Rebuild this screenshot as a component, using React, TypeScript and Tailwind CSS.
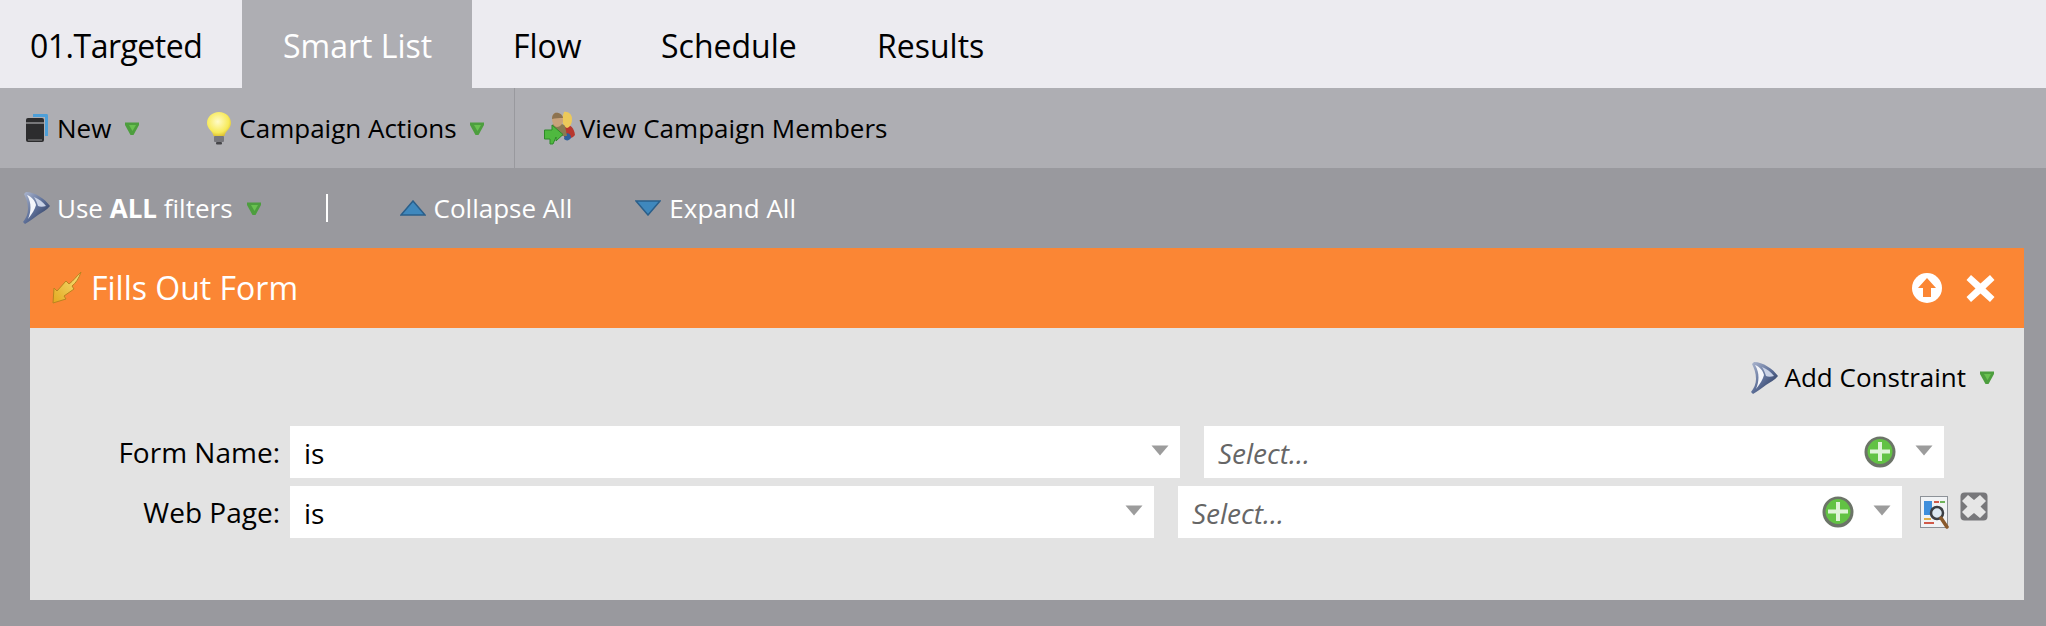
import type { ReactNode } from "react";

function GreenCaret() {
  return (
    <svg width="14" height="13" viewBox="0 0 14 13" className="shrink-0">
      <path d="M0 0.5 H14 V3 L8.5 13 H5.5 L0 3 Z" fill="#4d9e3e" />
      <path d="M4 3 H11 L7.5 9 Z" fill="#69c150" />
    </svg>
  );
}

function GrayCaret() {
  return (
    <svg width="18" height="11" viewBox="0 0 18 11" className="mb-[4px] shrink-0">
      <path d="M0.5 0.5 H17.5 L9 10.5 Z" fill="#9c9c9c" />
    </svg>
  );
}

function BookIcon() {
  return (
    <svg width="24" height="32" viewBox="0 0 24 32" className="shrink-0">
      <path d="M8 2 H22 Q23 2 23 4 V24 H20 V5 H8 Z" fill="#4d9fd8" />
      <rect x="1" y="6" width="18" height="24" rx="2" fill="#2c2c2e" />
      <rect x="1" y="10" width="18" height="2" fill="#77777a" />
      <rect x="3" y="27" width="14" height="2" fill="#5a5a5c" />
    </svg>
  );
}

function BulbIcon() {
  return (
    <svg width="26" height="34" viewBox="0 0 26 34" className="shrink-0">
      <defs>
        <radialGradient id="bulb" cx="0.45" cy="0.4" r="0.65">
          <stop offset="0" stopColor="#fffbc8" />
          <stop offset="0.7" stopColor="#f7ea5a" />
          <stop offset="1" stopColor="#d8b92c" />
        </radialGradient>
      </defs>
      <path d="M13 1 C20 1 25 6 25 12 C25 18 19 20 18.5 25 H7.5 C7 20 1 18 1 12 C1 6 6 1 13 1 Z" fill="url(#bulb)" />
      <rect x="8" y="25" width="10" height="6" rx="1" fill="#77777c" />
      <rect x="10" y="31" width="6" height="2.5" rx="1" fill="#46464a" />
    </svg>
  );
}

function MembersIcon() {
  return (
    <svg width="32" height="34" viewBox="0 0 32 34" className="shrink-0">
      <path d="M19 14 C24 12 30 15 31 24 C28 28 24 28 20 26 Z" fill="#b8372e" />
      <path d="M20 1 C24 0 28 3 28 8 C28 13 26 16 23 17 C20 16 18 12 18 7 Z" fill="#ecc95a" />
      <path d="M21 23 C24 21 27 23 27 27 C25 30 22 30 20 28 Z" fill="#2f5f9c" />
      <path d="M8 14 C11 12 18 12 21 15 L23 25 H9 Z" fill="#8a7a52" />
      <path d="M11 2 C15 1 19 4 19 9 C19 13 16 16 13 16 C10 16 8 12 8 7 C8 5 9 3 11 2 Z" fill="#c9a27a" />
      <path d="M11 2 C15 1 19 4 19 7 C15 7 11 7 8 8 C8 5 9 3 11 2 Z" fill="#8d7350" />
      <path d="M0.5 19 H8 V14 L19 23.5 L12 30 V26 L9 33 H6 V28 H0.5 Z" fill="#4fb83f" stroke="#2f8a2a" strokeWidth="1" />
    </svg>
  );
}

function FunnelIcon() {
  return (
    <svg width="28" height="32" viewBox="0 0 28 32" className="shrink-0">
      <defs>
        <linearGradient id="funnel" x1="0" y1="0" x2="1" y2="1">
          <stop offset="0" stopColor="#aeb8d0" />
          <stop offset="0.5" stopColor="#5d6f98" />
          <stop offset="1" stopColor="#1f2c4a" />
        </linearGradient>
      </defs>
      <path
        d="M4 0 C13 0 23 7 28 14 C25 18 20 20 16 23 C12 26 8 29 3 32 L1 30 C4 26 6 22 6 17 C6 11 4 6 2 2 Z"
        fill="url(#funnel)"
      />
      <path d="M5 3 C10 5 13 9 14 13 C13 17 10 22 6 27 C9 20 10 11 5 3 Z" fill="#f4f6fb" />
      <path d="M12 5 C17 7 21 10 24 14 C21 15 18 15 16 14 C15 11 14 8 12 5 Z" fill="#c9d2e6" />
    </svg>
  );
}

function BoltIcon() {
  return (
    <svg width="30" height="32" viewBox="0 0 30 32" className="shrink-0">
      <defs>
        <linearGradient id="bolt" x1="1" y1="0" x2="0" y2="1">
          <stop offset="0" stopColor="#f7e27a" />
          <stop offset="1" stopColor="#e3a91f" />
        </linearGradient>
      </defs>
      <path
        d="M29 0 C27 6 24 11 20 14 L22 17 L12 24 L14 27 L1 31 L2 16 L5 19 L14 9 L17 12 C21 9 25 4 29 0 Z"
        fill="url(#bolt)"
        stroke="#b98420"
        strokeWidth="1"
      />
    </svg>
  );
}

function PlusIcon() {
  return (
    <svg width="32" height="32" viewBox="0 0 32 32" className="mr-[19px] shrink-0">
      <circle cx="16" cy="16" r="15.5" fill="#6c7468" />
      <circle cx="16" cy="15.5" r="12.5" fill="#62c244" />
      <path d="M14 6 H18 V13.5 H26 V17.5 H18 V25 H14 V17.5 H6 V13.5 H14 Z" fill="#dff3d8" />
    </svg>
  );
}

function LookupIcon() {
  return (
    <svg width="30" height="33" viewBox="0 0 30 33" className="shrink-0">
      <rect x="0.5" y="0.5" width="27" height="31" fill="#f1f3f5" stroke="#8d9298" />
      <rect x="4" y="5" width="8" height="14" fill="#3f8fdc" />
      <rect x="14" y="5" width="5" height="2" fill="#d05a4a" />
      <rect x="20" y="5" width="5" height="2" fill="#6fb35a" />
      <rect x="4" y="22" width="7" height="2" fill="#e0b04a" />
      <rect x="4" y="26" width="10" height="2" fill="#d05a4a" />
      <circle cx="17" cy="17" r="6" fill="#dbe8f2" stroke="#3b3f44" strokeWidth="2.5" />
      <path d="M21 22 L27 31" stroke="#8a5a2c" strokeWidth="3.5" strokeLinecap="round" />
    </svg>
  );
}

function GrayClose() {
  return (
    <svg width="28" height="29" viewBox="0 0 28 29" className="mb-[12px] shrink-0">
      <rect x="0.5" y="0.5" width="27" height="28" rx="4" fill="#77777a" />
      <path d="M8 3 L14 8 L20 3 L26 9 L20.5 14.5 L26 20 L20 26 L14 21 L8 26 L2 20 L7.5 14.5 L2 9 Z" fill="#e6e6e6" />
    </svg>
  );
}

function Tab({ label, active, className }: { label: string; active?: boolean; className: string }) {
  return (
    <div
      className={`flex h-full items-center pt-[3px] text-[32px] ${active ? "bg-[#aeaeb3] text-white" : "text-black"} ${className}`}
    >
      {label}
    </div>
  );
}

function SelectBox({
  className,
  placeholder,
  value,
  plus,
}: {
  className: string;
  placeholder?: string;
  value?: string;
  plus?: boolean;
}) {
  return (
    <div className={`flex h-[52px] items-center bg-white ${className}`}>
      {placeholder ? (
        <span className="flex-1 pt-[2px] text-[28px] italic text-[#666666]">{placeholder}</span>
      ) : (
        <span className="flex-1 pt-[2px] text-[28px] text-black">{value}</span>
      )}
      {plus && <PlusIcon />}
      <GrayCaret />
    </div>
  );
}

function Row({ label, children }: { label: string; children: ReactNode }) {
  return (
    <div className="flex h-[52px] items-center">
      <div className="w-[250px] text-right text-[28px] text-black">{label}</div>
      {children}
    </div>
  );
}

export default function App() {
  return (
    <div className="flex h-[626px] w-[2046px] flex-col overflow-hidden bg-[#99999e] font-['Open_Sans',sans-serif]">
      <div className="flex h-[88px] shrink-0 bg-[#ecebf0]">
        <Tab label="01.Targeted" className="w-[242px] pl-[30px] tracking-[-0.5px]" />
        <Tab label="Smart List" active className="w-[230px] pl-[41px]" />
        <Tab label="Flow" className="w-[172px] pl-[41px]" />
        <Tab label="Schedule" className="w-[233px] pl-[17px]" />
        <Tab label="Results" className="pl-[0px]" />
      </div>

      <div className="flex h-[80px] shrink-0 items-center bg-[#aeaeb3] text-[26px] text-black">
        <div className="flex items-center pl-[25px]">
          <BookIcon />
          <span className="ml-[8px]">New</span>
          <span className="ml-[14px]">
            <GreenCaret />
          </span>
        </div>
        <div className="ml-[67px] flex items-center">
          <BulbIcon />
          <span className="ml-[7px]">Campaign Actions</span>
          <span className="ml-[13px]">
            <GreenCaret />
          </span>
        </div>
        <div className="ml-[30px] h-full w-px bg-[#99999e]" />
        <div className="ml-[29px] flex items-center">
          <MembersIcon />
          <span className="ml-[4px]">View Campaign Members</span>
        </div>
      </div>

      <div className="flex h-[80px] shrink-0 items-center text-[26px] text-white">
        <div className="flex items-center pl-[22px]">
          <FunnelIcon />
          <span className="ml-[7px]">
            Use <b>ALL</b> filters
          </span>
          <span className="ml-[14px]">
            <GreenCaret />
          </span>
        </div>
        <div className="ml-[65px] h-[28px] w-[2px] bg-white" />
        <div className="ml-[72px] flex items-center">
          <svg width="26" height="16" viewBox="0 0 26 16" className="shrink-0">
            <path d="M13 1 L25 15 H1 Z" fill="#3f88bd" stroke="#2a5f8a" strokeWidth="1.5" />
          </svg>
          <span className="ml-[8px]">Collapse All</span>
        </div>
        <div className="ml-[63px] flex items-center">
          <svg width="26" height="16" viewBox="0 0 26 16" className="shrink-0">
            <path d="M1 1 H25 L13 15 Z" fill="#3f88bd" stroke="#2a5f8a" strokeWidth="1.5" />
          </svg>
          <span className="ml-[8px]">Expand All</span>
        </div>
      </div>

      <div className="mx-[22px] ml-[30px] flex h-[352px] flex-col">
        <div className="flex h-[80px] shrink-0 items-center bg-[#fb8634] pl-[22px] pr-[29px] text-white">
          <BoltIcon />
          <span className="ml-[9px] flex-1 text-[32px]">Fills Out Form</span>
          <svg width="30" height="30" viewBox="0 0 30 30" className="shrink-0">
            <circle cx="15" cy="15" r="15" fill="#ffffff" />
            <path d="M15 5 L24 15 H19 V24 H11 V15 H6 Z" fill="#fb8634" />
          </svg>
          <svg width="29" height="29" viewBox="0 0 29 29" className="ml-[24px] shrink-0">
            <path d="M5 1 L14.5 9.5 L24 1 L28.5 6 L19.5 14.5 L28.5 23 L24 28 L14.5 19.5 L5 28 L0.5 23 L9.5 14.5 L0.5 6 Z" fill="#ffffff" />
          </svg>
        </div>

        <div className="flex flex-1 flex-col bg-[#e3e3e3]">
          <div className="mt-[30px] flex items-center justify-end pr-[30px] text-[26px] text-black">
            <FunnelIcon />
            <span className="ml-[7px]">Add Constraint</span>
            <span className="ml-[14px]">
              <GreenCaret />
            </span>
          </div>

          <div className="mt-[29px] flex flex-col gap-[8px]">
            <Row label="Form Name:">
              <SelectBox className="ml-[10px] w-[890px] pl-[14px] pr-[11px]" value="is" />
              <SelectBox className="ml-[24px] w-[740px] pl-[14px] pr-[11px]" placeholder="Select..." plus />
            </Row>
            <Row label="Web Page:">
              <SelectBox className="ml-[10px] w-[864px] pl-[14px] pr-[11px]" value="is" />
              <SelectBox className="ml-[24px] w-[724px] pl-[14px] pr-[11px]" placeholder="Select..." plus />
              <span className="ml-[18px]">
                <LookupIcon />
              </span>
              <span className="ml-[10px]">
                <GrayClose />
              </span>
            </Row>
          </div>
        </div>
      </div>
    </div>
  );
}
